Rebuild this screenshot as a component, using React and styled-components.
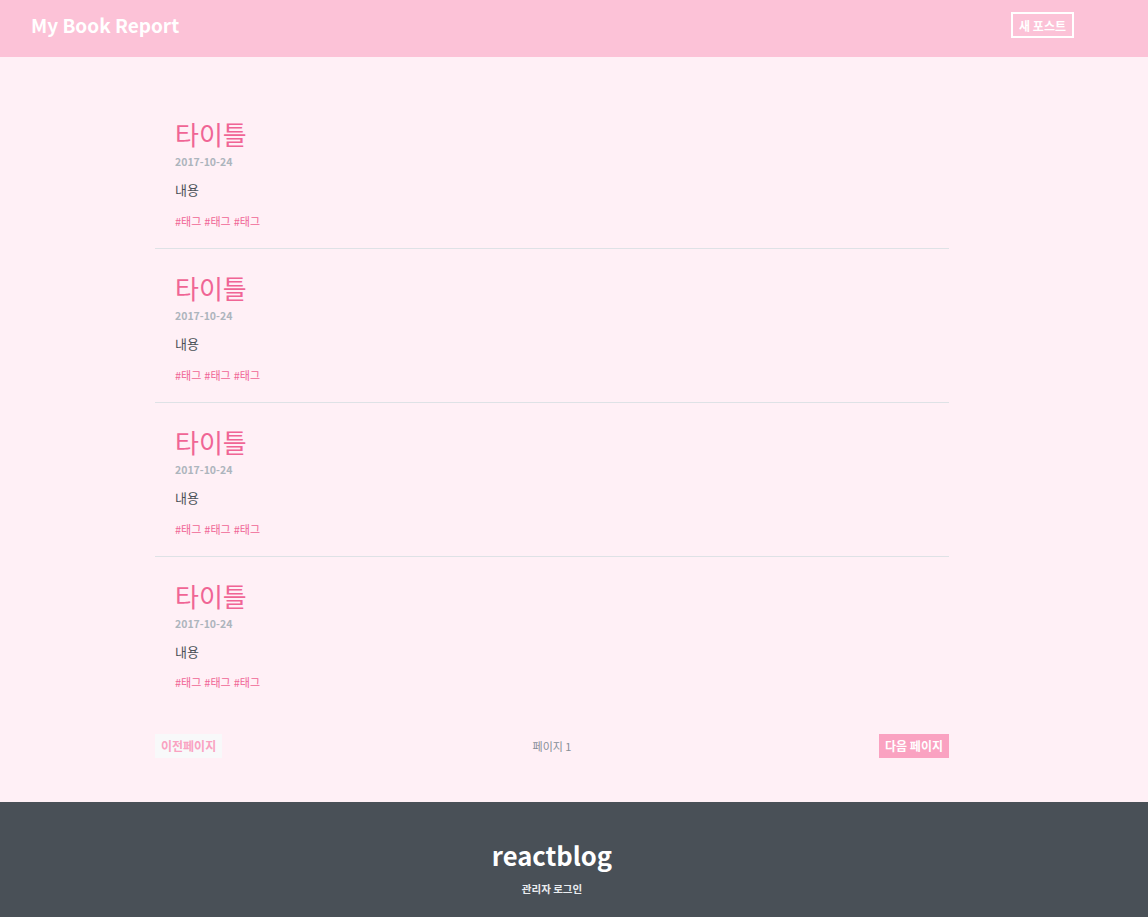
import React from 'react';
import styled, { createGlobalStyle } from 'styled-components';

const GlobalStyle = createGlobalStyle`
  html, body { margin: 0; padding: 0; background: #fff0f6; }
  body { font-family: "Noto Sans CJK KR", "Noto Sans", sans-serif; }
  * { box-sizing: border-box; }
`;

const Page = styled.div`
  display: flex;
  flex-direction: column;
  min-height: 917px;
`;

const HeaderBar = styled.header`
  background: #fcc2d7;
  height: 57px;
`;

const HeaderInner = styled.div`
  width: 1104px;
  height: 100%;
  padding: 12px 30px 0 31px;
  display: flex;
  align-items: flex-start;
  justify-content: space-between;
`;

const Logo = styled.a`
  color: #fff;
  font-size: 19px;
  font-weight: 700;
  line-height: 26px;
  text-decoration: none;
`;

const NewPostButton = styled.a`
  display: inline-flex;
  align-items: center;
  height: 26px;
  padding: 0 6px;
  border: 2px solid #fff;
  color: #fff;
  font-size: 12px;
  font-weight: 700;
  text-decoration: none;
`;

const Main = styled.main`
  flex: 1;
  width: 1104px;
  padding: 38px 155px 42px 155px;
`;

const List = styled.div`
  display: flex;
  flex-direction: column;
`;

const Item = styled.article`
  padding: 21px 20px 19px;
  border-bottom: ${p => (p.$last ? 'none' : '1px solid #dee2e6')};
`;

const Title = styled.h2`
  margin: 0;
  font-size: 26px;
  font-weight: 400;
  line-height: 1.4;
  color: #f06595;
`;

const DateText = styled.div`
  margin-top: 3px;
  font-size: 10.5px;
  font-weight: 700;
  color: #adb5bd;
  line-height: 14px;
`;

const Body = styled.p`
  margin: 12px 0 0;
  font-size: 13px;
  color: #495057;
  line-height: 1.4;
`;

const Tags = styled.div`
  margin-top: 14px;
  display: flex;
  gap: 3px;
  font-size: 11px;
  line-height: 1.4;
`;

const Tag = styled.a`
  color: #f06595;
  text-decoration: none;
`;

const Pagination = styled.nav`
  margin-top: 24px;
  display: grid;
  grid-template-columns: 1fr auto 1fr;
  align-items: center;
`;

const PageButton = styled.a`
  justify-self: ${p => (p.$next ? 'end' : 'start')};
  display: inline-flex;
  align-items: center;
  height: 24px;
  padding: 0 6px;
  font-size: 12px;
  font-weight: 700;
  text-decoration: none;
  background: ${p => (p.$next ? '#faa2c1' : '#f8f9fa')};
  color: ${p => (p.$next ? '#fff' : '#faa2c1')};
`;

const PageNumber = styled.div`
  font-size: 11px;
  color: #868e96;
`;

const Footer = styled.footer`
  background: #495057;
  height: 115px;
`;

const FooterInner = styled.div`
  width: 1104px;
  height: 100%;
  display: flex;
  flex-direction: column;
  align-items: center;
  padding-top: 38px;
`;

const FooterBrand = styled.div`
  color: #fff;
  font-size: 25.6px;
  font-weight: 700;
  line-height: 1.2;
`;

const FooterLink = styled.a`
  margin-top: 10px;
  color: #e9ecef;
  font-size: 10.5px;
  font-weight: 700;
  text-decoration: none;
`;

const posts = [1, 2, 3, 4];

export default function App() {
  return (
    <>
      <GlobalStyle />
      <Page>
        <HeaderBar>
          <HeaderInner>
            <Logo>My Book Report</Logo>
            <NewPostButton>새 포스트</NewPostButton>
          </HeaderInner>
        </HeaderBar>
        <Main>
          <List>
            {posts.map((p, i) => (
              <Item key={p} $last={i === posts.length - 1}>
                <Title>타이틀</Title>
                <DateText>2017-10-24</DateText>
                <Body>내용</Body>
                <Tags>
                  <Tag>#태그</Tag>
                  <Tag>#태그</Tag>
                  <Tag>#태그</Tag>
                </Tags>
              </Item>
            ))}
          </List>
          <Pagination>
            <PageButton>이전페이지</PageButton>
            <PageNumber>페이지 1</PageNumber>
            <PageButton $next>다음 페이지</PageButton>
          </Pagination>
        </Main>
        <Footer>
          <FooterInner>
            <FooterBrand>reactblog</FooterBrand>
            <FooterLink>관리자 로그인</FooterLink>
          </FooterInner>
        </Footer>
      </Page>
    </>
  );
}
